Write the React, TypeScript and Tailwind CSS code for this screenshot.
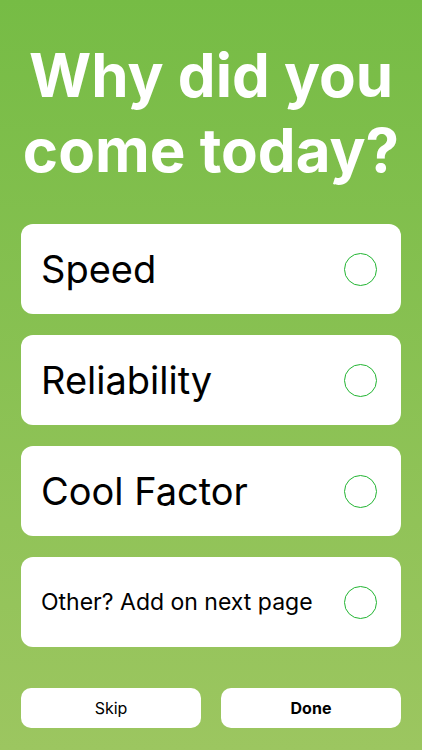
import React from 'react';

const options = [
  { label: 'Speed', small: false },
  { label: 'Reliability', small: false },
  { label: 'Cool Factor', small: false },
  { label: 'Other? Add on next page', small: true },
];

export default function App() {
  return (
    <div
      className="w-[422px] h-[750px] flex flex-col px-[21px] bg-gradient-to-b from-[#76bc45] to-[#9cc660] text-black"
      style={{ fontFamily: 'Inter, "Noto Sans", sans-serif' }}
    >
      <h1 className="mt-[38px] text-center text-white font-bold text-[60px] leading-[75px] whitespace-nowrap">
        Why did you
        <br />
        come today?
      </h1>

      <div className="mt-[36px] flex flex-col gap-[21px]">
        {options.map((o) => (
          <div
            key={o.label}
            className="h-[90px] bg-white rounded-[12px] flex items-center justify-between pl-[20px] pr-[24px]"
          >
            <span className={o.small ? 'text-[23px]' : 'text-[38px]'}>{o.label}</span>
            <div className="w-[33px] h-[33px] rounded-full border-[1.5px] border-[#22b532]" />
          </div>
        ))}
      </div>

      <div className="mt-[41px] flex gap-[20px]">
        <button className="flex-1 h-[40px] bg-white rounded-[10px] text-[16px]">Skip</button>
        <button className="flex-1 h-[40px] bg-white rounded-[10px] text-[16px] font-bold">Done</button>
      </div>
    </div>
  );
}
